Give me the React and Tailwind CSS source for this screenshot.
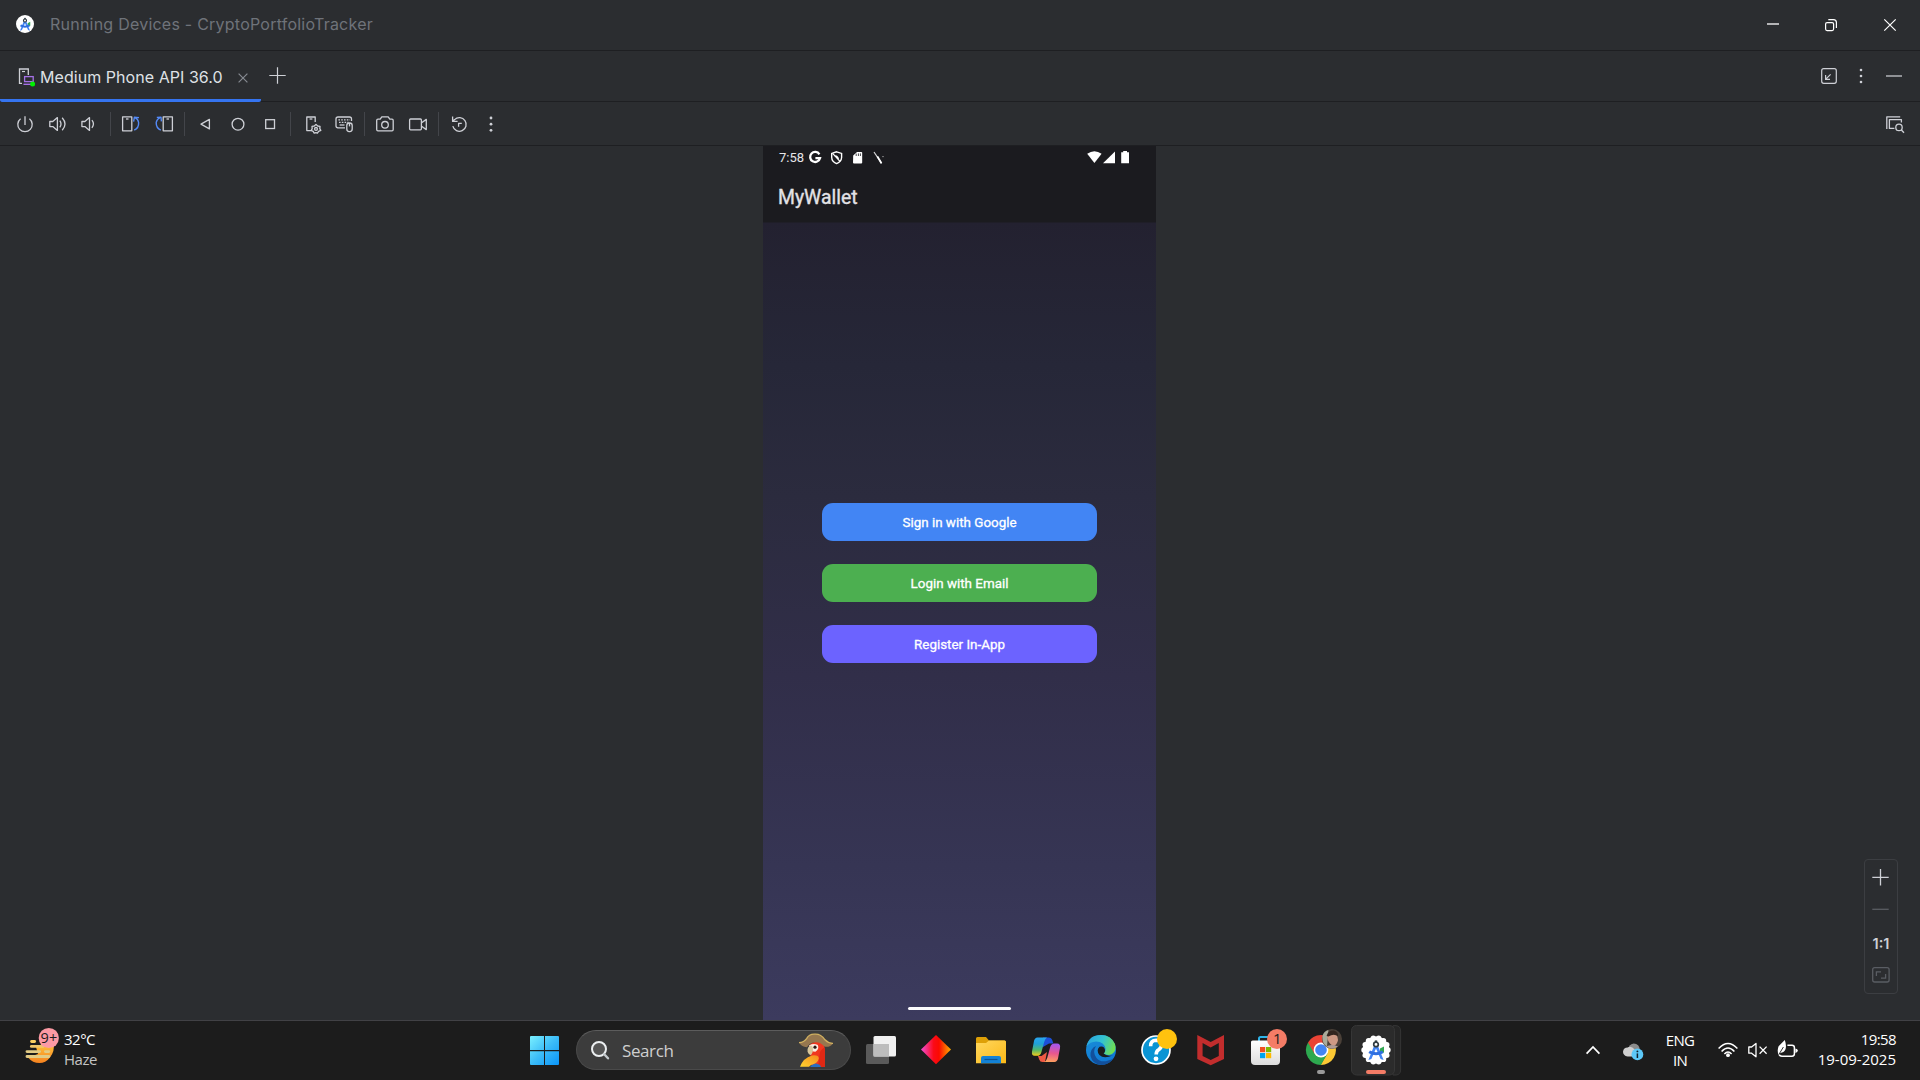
import React from "react";

function Ic({ x, y, w, h, className = "", children }) {
  return (
    <svg
      width={w}
      height={h}
      viewBox={`${x} ${y} ${w} ${h}`}
      fill="none"
      stroke="none"
      className={"block shrink-0 " + className}
    >
      {children}
    </svg>
  );
}

function Tool({ x, className, children }) {
  return (
    <Ic x={x} y={114} w={20} h={20} className={className}>
      <g stroke="#ced0d6" strokeWidth="1.3" strokeLinejoin="round">
        {children}
      </g>
    </Ic>
  );
}

function Divider({ className }) {
  return <div className={"-mt-[2px] h-6 w-px shrink-0 bg-[#43454a] " + className} />;
}

function CompassA({ cx, cy, s }) {
  return (
    <g transform={`translate(${cx} ${cy}) scale(${s})`}>
      <path d="M4 -1 L8 -3 L8 3 L4 4Z" fill="#34a853" />
      <path d="M-1.4 -5 L1.4 -5 L7.6 10.5 L4.6 9.5 L0 -1 L-4.6 9.5 L-7.6 10.5Z" fill="#4285f4" />
      <path d="M-7.6 3.6 Q0 8 7.6 3.6 L6 1.2 Q0 4.4 -6 1.2Z" fill="#2f6fe0" />
      <rect x="-1.2" y="-9" width="2.4" height="4" fill="#303c42" />
      <circle cy="-5" r="2.3" fill="#fff" stroke="#303c42" strokeWidth="1.7" />
    </g>
  );
}

function TitleBar() {
  return (
    <div className="flex h-[51px] shrink-0 items-start border-b border-[#1e1f22]">
      <Ic x={16} y={15} w={18} h={18} className="ml-4 mt-[15px]">
        <circle cx="25" cy="24" r="9" fill="#fff" />
        <CompassA cx={25} cy={23.8} s={0.66} />
      </Ic>
      <span className="ml-4 mt-3 text-[16px] leading-6 tracking-[0.23px] text-[#6f737a] whitespace-nowrap">
        Running Devices - CryptoPortfolioTracker
      </span>
      <div className="ml-auto flex pr-5 pt-[15px]">
        <Ic x={1763} y={15} w={20} h={20}>
          <path d="M1767 24H1779" stroke="#fff" strokeWidth="1.3" />
        </Ic>
        <Ic x={1821} y={15} w={20} h={20} className="ml-[38px]">
          <rect x="1825.6" y="22.6" width="8" height="8" rx="1.5" stroke="#fff" strokeWidth="1.2" />
          <path d="M1828.3 19.7H1833.5Q1836.4 19.7 1836.4 22.6V28" stroke="#fff" strokeWidth="1.2" />
        </Ic>
        <Ic x={1880} y={15} w={20} h={20} className="ml-[39px]">
          <path d="M1884.3 19.3L1895.7 30.7M1895.7 19.3L1884.3 30.7" stroke="#fff" strokeWidth="1.2" />
        </Ic>
      </div>
    </div>
  );
}

function TabBar() {
  return (
    <div className="flex h-[51px] shrink-0 items-start border-b border-[#1e1f22]">
      <div className="flex h-[51px] w-[261px] items-start rounded-b-[2px] border-b-[3px] border-[#3574f0]">
        <Ic x={17} y={66} w={20} h={21} className="ml-[17px] mt-[15px]">
          <path d="M22 83.4H19.5V69H28.3V75" stroke="#ced0d6" strokeWidth="1.3" />
          <path d="M22 71.5H25" stroke="#ced0d6" strokeWidth="1.2" />
          <rect x="24.6" y="76.6" width="8.6" height="5" stroke="#a571e6" strokeWidth="1.3" />
          <path d="M23.5 84.3H31" stroke="#a571e6" strokeWidth="1.4" />
          <circle cx="32.6" cy="84" r="2.5" fill="#00f000" />
        </Ic>
        <span className="ml-[3px] mt-[14px] w-[184px] text-[16px] leading-6 tracking-[0.05px] text-[#dfe1e5] whitespace-nowrap">
          Medium Phone API 36.0
        </span>
        <Ic x={236} y={71} w={14} h={14} className="ml-3 mt-5">
          <path d="M238.6 73.6L247.4 82.4M247.4 73.6L238.6 82.4" stroke="#868a91" strokeWidth="1.2" />
        </Ic>
      </div>
      <Ic x={268} y={66} w={19} h={19} className="ml-[7px] mt-[15px]">
        <path d="M269.3 75.5H285.7M277.5 67.3V83.7" stroke="#ced0d6" strokeWidth="1.2" />
      </Ic>
      <div className="ml-auto flex pr-[16px] pt-[15px]">
        <Ic x={1819} y={66} w={20} h={20}>
          <rect x="1821.7" y="68.7" width="14.6" height="14.6" rx="2" stroke="#ced0d6" strokeWidth="1.2" />
          <path d="M1830.6 74.4L1825.8 79.2M1825.6 75V79.4H1830" stroke="#ced0d6" strokeWidth="1.2" />
        </Ic>
        <Ic x={1851} y={66} w={20} h={20} className="ml-3">
          <g fill="#ced0d6">
            <circle cx="1861" cy="70" r="1.3" />
            <circle cx="1861" cy="76" r="1.3" />
            <circle cx="1861" cy="82" r="1.3" />
          </g>
        </Ic>
        <Ic x={1884} y={66} w={20} h={20} className="ml-[13px]">
          <path d="M1886 76H1902" stroke="#a9abb0" strokeWidth="1.6" />
        </Ic>
      </div>
    </div>
  );
}

function Toolbar() {
  return (
    <div className="flex h-[44px] shrink-0 items-start border-b border-[#1e1f22] pt-3">
      <Tool x={15} className="ml-[15px]">
        <path d="M20.6 118.8A7.2 7.2 0 1 0 29.4 118.8" />
        <path d="M25 116.3V125" />
      </Tool>
      <Tool x={48} className="ml-[13px]">
        <path d="M49.8 121.5H52.8L57.4 117.6V130.4L52.8 126.6H49.8Z" />
        <path d="M59.8 120.7Q62.2 124 59.8 127.3M62.2 117.7Q67.8 124 62.2 130.3" />
      </Tool>
      <Tool x={78} className="ml-[10px]">
        <path d="M81.9 121.5H84.9L89.5 117.6V130.4L84.9 126.6H81.9Z" />
        <path d="M91.9 120.2Q95 124 91.9 127.8" />
      </Tool>
      <Divider className="ml-3" />
      <Tool x={121} className="ml-[10px]">
        <rect x="122.6" y="116.8" width="9.2" height="14" />
        <path d="M126 119H128.5" />
        <path d="M134.2 130.2Q139 128 138.6 122.5Q138.2 119 135 117.6M133.6 121.6L134.4 117.2L139 117.6" stroke="#548af7" strokeWidth="1.4" />
      </Tool>
      <Tool x={154} className="ml-[13px]">
        <rect x="163.2" y="116.8" width="9.2" height="14" />
        <path d="M166.5 119H169" />
        <path d="M160.8 130.2Q156 128 156.2 122.5Q156.8 119 160 117.6M156.8 117.4L161 117.2L161.4 121.4" stroke="#548af7" strokeWidth="1.4" />
      </Tool>
      <Divider className="ml-[10px]" />
      <Tool x={195} className="ml-[10px]">
        <path d="M209.4 119.4V128.9L201 124.1Z" />
      </Tool>
      <Tool x={228} className="ml-[13px]">
        <circle cx="238" cy="124.2" r="5.9" />
      </Tool>
      <Tool x={260} className="ml-3">
        <rect x="265.7" y="119.7" width="8.8" height="8.8" strokeLinejoin="miter" />
      </Tool>
      <Divider className="ml-[10px]" />
      <Tool x={303} className="ml-3">
        <path d="M311.5 130.6H306.8V117H315.2V122" />
        <path d="M309.6 119H312.4" />
        <path d="M316 124.4L317.7 126L320 126.4L319.8 128.7L320.8 130.4L318.6 131.4L317.4 133.2L316 132.6L314.2 133.2L313.2 131.4L311.2 130.4L312.2 128.7L312 126.4L314.3 126Z" />
        <circle cx="316" cy="128.9" r="1.4" />
      </Tool>
      <Tool x={334} className="ml-[11px]">
        <path d="M345 127.8H338Q336 127.8 336 126V119Q336 117 338 117H349.5Q351.5 117 351.5 119V121" />
        <path d="M338.4 119.8H350M339 122.4H348.5" strokeDasharray="1.6 1.2" />
        <path d="M339.6 125H344.5" />
        <rect x="346.8" y="123" width="5.4" height="8.6" rx="2.5" />
        <path d="M349.5 123V126.4" />
      </Tool>
      <Divider className="ml-[10px]" />
      <Tool x={375} className="ml-[10px]">
        <path d="M378 119.2H380.2L381.8 116.8H388.2L389.8 119.2H392Q393.2 119.2 393.2 120.6V129.4Q393.2 130.8 392 130.8H378Q376.7 130.8 376.7 129.4V120.6Q376.7 119.2 378 119.2Z" />
        <circle cx="385" cy="124.8" r="3.3" />
      </Tool>
      <Tool x={408} className="ml-[13px]">
        <rect x="409.6" y="119" width="11.8" height="10.8" rx="1" />
        <path d="M421.6 122.8L426.3 119.4V129.6L421.6 126.2" />
      </Tool>
      <Divider className="ml-[10px]" />
      <Tool x={449} className="ml-[10px]">
        <path d="M452.8 126.2A6.8 6.8 0 1 0 454.6 119.6L452.7 121.3M452.6 116.4V121.4H457.6" />
        <path d="M458.6 126.8V123.4H461.8" />
      </Tool>
      <Tool x={481} className="ml-3">
        <g fill="#ced0d6" stroke="none">
          <circle cx="491" cy="118" r="1.4" />
          <circle cx="491" cy="124.2" r="1.4" />
          <circle cx="491" cy="130.3" r="1.4" />
        </g>
      </Tool>
      <Tool x={1885} className="ml-auto mr-[15px]">
        <path d="M1886.8 129V116.8H1900.2" />
        <path d="M1894.4 128.4H1889.4V119.6H1901.4V122.6" />
        <circle cx="1899" cy="127.4" r="3.2" />
        <path d="M1901.4 130L1904 132.8" />
      </Tool>
    </div>
  );
}

function ActionButton({ className, children }) {
  return (
    <div
      className={
        "flex h-[38px] w-[275px] items-center justify-center rounded-[11px] pt-[2px] font-[Roboto,sans-serif] text-[13.4px] text-white [-webkit-text-stroke:0.3px_white] " +
        className
      }
    >
      {children}
    </div>
  );
}

function Phone() {
  return (
    <div className="flex h-full w-[393px] flex-col bg-[linear-gradient(180deg,#1b1b1f_0px,#1b1b1f_76px,#232130_77px,#262738_220px,#2b2b3e_350px,#312e49_530px,#363554_720px,#3c3b5e_874px)] font-[Roboto,sans-serif]">
      <div className="flex h-[23px] shrink-0 items-start pl-4 pt-1">
        <span className="w-[27px] text-[13px] leading-4 text-[#e6e6e8]">7:58</span>
        <Ic x={808} y={150} w={14} h={15} className="ml-[2px]">
          <path d="M819.4 154.3A5 5 0 1 0 820 158.2H815.4" stroke="#fff" strokeWidth="2.3" />
        </Ic>
        <Ic x={830} y={150} w={14} h={15} className="ml-2">
          <path d="M836.6 151.8L841.6 153.4V157.5Q841.4 161.6 836.6 163.6Q831.8 161.6 831.7 157.5V153.4Z" stroke="#fff" strokeWidth="1.4" />
          <path d="M832.6 153.4L840 161.4M834.4 156Q837.4 155.4 838.4 159" stroke="#fff" strokeWidth="1.3" />
        </Ic>
        <Ic x={852} y={150} w={12} h={15} className="ml-2">
          <path d="M853.2 155.6L857 152H861.4Q862.2 152 862.2 152.8V162.6Q862.2 163.6 861.2 163.6H854Q853 163.6 853 162.6Z" fill="#fff" />
          <path d="M856.2 153.6V156M858.4 153.4V156M860.4 153.4V156" stroke="#1b1b1f" strokeWidth="0.8" />
        </Ic>
        <Ic x={872} y={150} w={14} h={15} className="ml-2">
          <path d="M874 152L881.6 163.4" stroke="#d8d8da" strokeWidth="1.2" />
          <path d="M877.4 156.4L881.4 163.2" stroke="#fff" strokeWidth="1.8" />
          <circle cx="883" cy="156.6" r="0.7" fill="#bbb" />
        </Ic>
        <Ic x={1087} y={150} w={15} h={15} className="ml-auto">
          <path d="M1087.2 153.8Q1094.4 148.6 1101.6 153.8L1094.4 163Z" fill="#fff" />
        </Ic>
        <Ic x={1102} y={150} w={14} h={15}>
          <path d="M1103 163.2L1115 151.4V163.2Z" fill="#fff" />
        </Ic>
        <Ic x={1120} y={150} w={10} h={15} className="ml-1 mr-[26px]">
          <path d="M1123.2 151H1127V152.2H1129V163.3H1121.2V152.2H1123.2Z" fill="#fff" />
        </Ic>
      </div>
      <div className="flex h-[53px] shrink-0 items-start pl-[15px] pt-[17px]">
        <span className="text-[19.4px] leading-6 text-[#e3e2e6] [-webkit-text-stroke:0.35px_#e3e2e6]">MyWallet</span>
      </div>
      <div className="flex flex-1 flex-col items-center gap-[23px] pt-[281px]">
        <ActionButton className="bg-[#4285f4]">Sign in with Google</ActionButton>
        <ActionButton className="bg-[#4caf50]">Login with Email</ActionButton>
        <ActionButton className="bg-[#6c63ff]">Register In-App</ActionButton>
      </div>
      <div className="mx-auto mb-[10px] h-[3px] w-[103px] shrink-0 rounded-full bg-[#fbfbfd]" />
    </div>
  );
}

function ZoomControls() {
  return (
    <div className="absolute right-[22px] top-[713px] flex h-[135px] w-[34px] flex-col items-center rounded-[4px] border border-[#3c3e42]">
      <Ic x={1871} y={867} w={20} h={20} className="mt-[7px]">
        <path d="M1872.3 877.3H1888.7M1880.5 869.1V885.5" stroke="#ced0d6" strokeWidth="1.3" />
      </Ic>
      <Ic x={1871} y={899} w={20} h={20} className="mt-3">
        <path d="M1872.3 909.3H1888.7" stroke="#5a5d63" strokeWidth="1.3" />
      </Ic>
      <span className="mt-[13px] h-6 text-[14.5px] font-semibold leading-6 text-[#ced0d6]">1:1</span>
      <Ic x={1871} y={965} w={20} h={20} className="mt-[9px]">
        <rect x="1872.7" y="967.6" width="16.4" height="14.4" rx="2" stroke="#5a5d63" strokeWidth="1.3" />
        <path d="M1876.4 976V971.8H1881M1881 978.2H1885.6V974" stroke="#5a5d63" strokeWidth="1.3" />
      </Ic>
    </div>
  );
}

function Slot({ x, children }) {
  return (
    <Ic x={x} y={1021} w={55} h={59}>
      {children}
    </Ic>
  );
}

const SCALLOPS = Array.from({ length: 14 }, (_, i) => (i * 2 * Math.PI) / 14);

function TaskIcons() {
  return (
    <div className="ml-[3px] flex">
      <Slot x={854}>
        <rect x="866" y="1044" width="23" height="20" rx="1.5" fill="#5a5a5a" />
        <rect x="873.5" y="1036" width="22.5" height="20.5" rx="1.5" fill="#f1f1f1" />
        <path d="M873.5 1044H889V1056.5H873.5Z" fill="#bdbdbd" />
      </Slot>
      <Slot x={909}>
        <defs>
          <linearGradient id="dia" x1="0" x2="1">
            <stop offset="0" stopColor="#f050d8" />
            <stop offset=".42" stopColor="#fb0a18" />
            <stop offset=".6" stopColor="#fb0a00" />
            <stop offset="1" stopColor="#ffb000" />
          </linearGradient>
        </defs>
        <path d="M936 1035L951 1049.5L936 1064.2L921 1049.5Z" fill="url(#dia)" />
      </Slot>
      <Slot x={964}>
        <defs>
          <linearGradient id="fold" x1="0" y1="0" x2="1" y2="1">
            <stop offset="0" stopColor="#ffd75e" />
            <stop offset="1" stopColor="#fbb917" />
          </linearGradient>
        </defs>
        <path d="M976 1038.5Q976 1037 977.5 1037H986L989 1040.5H1004.5Q1006 1040.5 1006 1042V1050H976Z" fill="#dea007" />
        <path d="M976 1043H986L989 1040.5H1004.5Q1006 1040.5 1006 1042V1063.3H976Z" fill="url(#fold)" />
        <path d="M981 1063.3V1058Q981 1056 983 1056H999Q1001 1056 1001 1058V1063.3Z" fill="#1382d6" />
        <path d="M984.5 1059.5H997.5" stroke="#0b5394" strokeWidth="1.2" />
      </Slot>
      <Slot x={1019}>
        <defs>
          <linearGradient id="cpa" x1="0" y1="0" x2="0" y2="1">
            <stop offset="0" stopColor="#2aa6ee" />
            <stop offset=".35" stopColor="#1fa0d8" />
            <stop offset=".68" stopColor="#52b86a" />
            <stop offset="1" stopColor="#f5cc1b" />
          </linearGradient>
          <linearGradient id="cpb" x1=".3" y1="0" x2=".2" y2="1">
            <stop offset="0" stopColor="#a456f0" />
            <stop offset=".5" stopColor="#e8568e" />
            <stop offset="1" stopColor="#ffa45c" />
          </linearGradient>
        </defs>
        <path d="M1043 1037.5H1048.5Q1051.5 1037.5 1052.4 1040.5L1053.4 1043.4H1049L1043 1047Z" fill="#1c50d8" />
        <path d="M1038 1056H1041.5L1047 1052L1045 1062H1042.5Q1040 1062 1039.2 1059.4Z" fill="#ef5a44" />
        <path d="M1037.5 1037.5H1047Q1045 1038.8 1044.2 1042L1041.3 1052.4Q1040.3 1055.8 1037 1055.8H1034.6Q1031.4 1055.8 1032 1051.4L1034 1041Q1034.8 1037.5 1037.5 1037.5Z" fill="url(#cpa)" />
        <path d="M1054.4 1062H1044Q1046.4 1061 1047.2 1058L1050.2 1047Q1051.2 1043.4 1054.4 1043.4H1057Q1060.8 1043.4 1060 1048L1058 1058.6Q1057.2 1062 1054.4 1062Z" fill="url(#cpb)" />
      </Slot>
      <Slot x={1074}>
        <defs>
          <linearGradient id="edt" x1="0" y1=".3" x2="1" y2=".6">
            <stop offset="0" stopColor="#2aa5e0" />
            <stop offset=".5" stopColor="#34c3d0" />
            <stop offset="1" stopColor="#72e04c" />
          </linearGradient>
          <linearGradient id="edb" x1="0" y1="0" x2=".6" y2="1">
            <stop offset="0" stopColor="#1a8fd8" />
            <stop offset="1" stopColor="#0f78d4" />
          </linearGradient>
        </defs>
        <circle cx="1101" cy="1050" r="15" fill="url(#edb)" />
        <path d="M1096 1046Q1092 1052 1096.5 1058Q1102 1064.6 1113.6 1058.2Q1109 1065 1101 1065Q1092.5 1064 1090.5 1056Q1090 1048.6 1096 1046Z" fill="#12509c" />
        <path d="M1086.4 1046.4Q1088.8 1035 1101 1035Q1111 1035 1115 1044Q1117 1051 1112 1054Q1107.6 1056 1103.8 1053.6Q1105.8 1051.6 1105.6 1049Q1104.4 1041.4 1096 1041.4Q1090 1041.6 1086.4 1046.4Z" fill="url(#edt)" />
        <path d="M1104 1047.4Q1106.4 1050.8 1103.6 1053.6Q1106.6 1056.8 1113 1055.2Q1104 1059.6 1099.4 1055Q1095.8 1050.4 1099.6 1046.8Q1102.2 1045.8 1104 1047.4Z" fill="#1c1c1c" />
      </Slot>
      <Slot x={1129}>
        <circle cx="1156" cy="1050" r="14" fill="#0a94d4" stroke="#fff" strokeWidth="1.7" />
        <path d="M1150.6 1046.2Q1150.6 1040.2 1156.2 1040.2Q1161.6 1040.4 1161.6 1045.2Q1161.4 1048 1158.6 1049.8Q1156.2 1051.2 1156.2 1054.4" stroke="#fff" strokeWidth="3.6" />
        <circle cx="1156" cy="1058.8" r="2.4" fill="#fff" />
        <circle cx="1167" cy="1039" r="10" fill="#ffc20e" />
      </Slot>
      <Slot x={1184}>
        <path d="M1197.3 1035L1210.7 1042L1224 1035V1059L1210.7 1065.2L1197.3 1059Z" fill="#c22d2d" />
        <path d="M1202.6 1043L1210.7 1047.6L1218.8 1043V1056L1210.7 1060L1202.6 1056Z" fill="#1c1c1c" />
      </Slot>
      <Slot x={1239}>
        <defs>
          <linearGradient id="sto" x1="0" y1="0" x2="0" y2="1">
            <stop offset="0" stopColor="#fff" />
            <stop offset="1" stopColor="#dcdcdc" />
          </linearGradient>
        </defs>
        <path d="M1259 1042V1038.6Q1259 1037 1260.6 1037H1270" stroke="#2fb3e8" strokeWidth="2" />
        <path d="M1251 1042Q1251 1040.4 1252.6 1040.4H1280V1061Q1280 1065 1276 1065H1255Q1251 1065 1251 1061Z" fill="url(#sto)" />
        <rect x="1260" y="1047" width="5.2" height="5.2" fill="#f25022" />
        <rect x="1266" y="1047" width="5.2" height="5.2" fill="#7fba00" />
        <rect x="1260" y="1053" width="5.2" height="5.2" fill="#00a4ef" />
        <rect x="1266" y="1053" width="5.2" height="5.2" fill="#ffb900" />
        <circle cx="1277" cy="1039" r="10" fill="#f47c66" />
        <text x="1277.4" y="1044.4" textAnchor="middle" fontFamily="Open Sans, sans-serif" fontSize="15" fill="#1c1c1c">1</text>
      </Slot>
      <Slot x={1294}>
        <path d="M1321 1050L1308 1042.5A15 15 0 0 1 1334 1042.5Z" fill="#ea4335" />
        <path d="M1321 1050L1321 1065A15 15 0 0 1 1308 1042.5Z" fill="#2da94f" />
        <path d="M1308 1042.5L1314.5 1053.8L1321 1050L1321 1043H1334Z" fill="#ea4335" />
        <path d="M1321 1043H1334.2A15 15 0 0 1 1321 1065L1327.5 1053.7Z" fill="#fcc934" />
        <path d="M1314.5 1053.8L1321 1065L1327.6 1053.8Z" fill="#2da94f" />
        <path d="M1321 1065L1327.6 1053.8L1333 1058Z" fill="#fcc934" />
        <circle cx="1321" cy="1050" r="7.4" fill="#fff" />
        <circle cx="1321" cy="1050" r="5.8" fill="#4285f4" />
        <circle cx="1332" cy="1039" r="10" fill="#4a4038" />
        <path d="M1322.4 1036Q1324 1031 1328.4 1030L1327 1046.6Q1322 1044 1322.4 1036Z" fill="#a9ab9a" />
        <path d="M1327 1036.6Q1331 1032.8 1337 1034.4L1338 1040Q1337 1045.6 1333 1046Q1328 1043.6 1327 1036.6Z" fill="#cf9a84" />
        <path d="M1326.6 1036Q1328 1030.4 1334 1030.6Q1338.6 1032 1338 1036.4Q1334 1033 1328.4 1036.6Z" fill="#33261f" />
        <path d="M1326 1046.6Q1331 1043.4 1338 1046.4Q1332 1051 1326 1046.6Z" fill="#b09c94" />
        <rect x="1317" y="1070" width="8" height="4" rx="2" fill="#9a9a9a" />
      </Slot>
      <Slot x={1349}>
        <path d="M1393 1025.6H1396Q1400.6 1026 1400.6 1031V1070Q1400.6 1074.6 1396 1075H1393Z" fill="#262626" stroke="#343434" strokeWidth="1" />
        <rect x="1351.5" y="1025.5" width="43" height="49.5" rx="5" fill="#2b2b2b" stroke="#363636" />
        <circle cx="1376" cy="1050" r="13.4" fill="#fff" />
        {SCALLOPS.map((a) => (
          <circle key={a} cx={1376 + 12 * Math.cos(a)} cy={1050 + 12 * Math.sin(a)} r="2.7" fill="#fff" />
        ))}
        <CompassA cx={1376} cy={1049.4} s={1} />
        <rect x="1366" y="1070" width="20" height="4" rx="2" fill="#f47c66" />
      </Slot>
    </div>
  );
}

function Taskbar() {
  return (
    <div className="flex h-[60px] shrink-0 items-start border-t border-[#414145] bg-[#1c1c1c] font-['Open_Sans',sans-serif] text-[15px] text-white">
      <div className="flex w-[524px] shrink-0">
        <Ic x={22} y={1021} w={40} h={59} className="ml-[22px]">
          <defs>
            <linearGradient id="sun" x1="0" y1="0" x2="0" y2="1">
              <stop offset="0" stopColor="#ffc23c" />
              <stop offset="1" stopColor="#f5821f" />
            </linearGradient>
          </defs>
          <path d="M36 1047H40L41 1044H53.6Q55 1051 50 1057.4Q45.6 1063 39.5 1063Q32.6 1063 28 1057.5L38 1054Z" fill="url(#sun)" />
          <g stroke="#e2cb85" strokeWidth="2.9" strokeLinecap="round">
            <path d="M31.6 1041.5H34.6" stroke="#f8cf62" />
            <path d="M31.4 1046.4H43" stroke="#efc76a" />
            <path d="M27 1051.6H39.6M45.4 1051.6H48.8M27 1056.5H48.8" />
          </g>
          <circle cx="48.8" cy="1038" r="10.1" fill="#fc9aa4" />
          <text x="48.9" y="1043.4" textAnchor="middle" fontFamily="Open Sans, sans-serif" fontSize="14.5" fill="#1c1c1c">9+</text>
        </Ic>
        <div className="ml-[2px] pt-2 leading-5 tracking-[-0.5px]">
          <div>32°C</div>
          <div className="text-[#c4c4c4]">Haze</div>
        </div>
      </div>
      <Ic x={524} y={1021} w={42} h={59}>
        <defs>
          <linearGradient id="win" gradientUnits="userSpaceOnUse" x1="530" y1="1036" x2="559" y2="1065">
            <stop offset="0" stopColor="#7af0ff" />
            <stop offset=".5" stopColor="#3cbcf8" />
            <stop offset="1" stopColor="#0a94f8" />
          </linearGradient>
        </defs>
        <path d="M530 1037Q530 1036 531 1036H544V1050H530ZM545 1036H558Q559 1036 559 1037V1050H545ZM530 1051.2H544V1065H531Q530 1065 530 1064ZM545 1051.2H559V1064Q559 1065 558 1065H545Z" fill="url(#win)" />
      </Ic>
      <div className="ml-[10px] mt-[9px] flex h-10 w-[275px] shrink-0 items-center rounded-full border border-[#4a4a4a] border-t-[#5c5c5c] bg-[#3c3c3c]">
        <Ic x={589} y={1039} w={22} h={22} className="ml-3">
          <circle cx="599" cy="1049" r="7" fill="#555" stroke="#eceff1" strokeWidth="2" />
          <path d="M604.2 1054.2L608 1058.3" stroke="#c3c8cc" strokeWidth="2.4" strokeLinecap="round" />
        </Ic>
        <span className="ml-[11px] pt-px text-[17px] tracking-[-0.4px] text-[#cfcfcf]">Search</span>
        <Ic x={797} y={1032} w={38} h={36} className="ml-auto mr-[15px]">
          <defs>
            <linearGradient id="wing" x1="0" y1="1" x2="1" y2="0">
              <stop offset="0" stopColor="#ffd530" />
              <stop offset="1" stopColor="#f58a1e" />
            </linearGradient>
          </defs>
          <path d="M809 1046Q812 1041 820 1041.5Q824.5 1043 824.8 1049V1067H812Z" fill="#f0371f" />
          <path d="M820 1052Q824 1046 824.8 1049V1067H818Z" fill="#e02814" />
          <path d="M810 1067Q814 1061 820 1065L821 1067Z" fill="#2a6fc0" />
          <path d="M800 1066.8Q803 1058 812 1055.4Q818.8 1054.6 818.8 1058.6Q817.6 1063.8 811 1065L809 1066.8Z" fill="url(#wing)" />
          <path d="M809 1045.4Q813.6 1043 817.8 1045Q819.6 1049 815.4 1051.8Q811 1051.6 809 1045.4Z" fill="#fbeee4" />
          <path d="M811 1045.6Q807 1046.6 807.6 1051.6Q808.4 1055 811 1055Q814 1051.4 812.6 1046.8Z" fill="#d9c79c" />
          <circle cx="815" cy="1047.2" r="1.6" fill="#2a1712" />
          <path d="M799 1042.6Q804 1042.4 806.6 1038.6Q809 1034 814.6 1034.2Q820.6 1033.6 825 1039.8Q828.6 1043.6 833 1043.4Q830 1047.6 824.4 1046.6Q820 1041.2 813.6 1042.4Q809.6 1043 807 1047.2Q801 1046.8 799 1042.6Z" fill="#96774f" />
          <path d="M799 1042.6Q804 1042.4 806.6 1038.6Q809 1034 814.6 1034.2Q820.6 1033.6 825 1039.8Q828.6 1043.6 833 1043.4" stroke="#d0b060" strokeWidth="1.3" />
        </Ic>
      </div>
      <TaskIcons />
      <div className="ml-auto flex">
        <Ic x={1583} y={1021} w={20} h={59}>
          <path d="M1586.6 1053.6L1593 1047L1599.4 1053.6" stroke="#fff" strokeWidth="1.7" />
        </Ic>
        <Ic x={1620} y={1021} w={26} h={59} className="ml-[17px]">
          <path d="M1628 1050Q1628.6 1044 1633.6 1043.4Q1639.4 1043.6 1640 1050L1637 1056H1629Z" fill="#8c8c8c" />
          <path d="M1627.6 1056.6Q1623 1055.6 1623 1051.8Q1623.6 1047.6 1627.6 1047.6Q1631 1045 1634.6 1049.4L1638.6 1056.6Z" fill="#cfcfcf" />
          <circle cx="1637.4" cy="1054.4" r="5.9" fill="#5cc8f8" />
          <path d="M1637.4 1053.4V1058" stroke="#10222c" strokeWidth="1.5" />
          <circle cx="1637.4" cy="1051.4" r="0.95" fill="#10222c" />
        </Ic>
        <div className="ml-[13px] w-[42px] pt-[9px] text-center leading-5 tracking-[-0.7px]">
          <div>ENG</div>
          <div>IN</div>
        </div>
        <Ic x={1716} y={1021} w={24} h={59} className="ml-[15px]">
          <g stroke="#fff" strokeWidth="1.5">
            <path d="M1718.6 1048.6Q1728 1038.6 1737.4 1048.6" />
            <path d="M1721.6 1051.4Q1728 1044.4 1734.4 1051.4" />
            <path d="M1724.4 1054Q1728 1050 1731.6 1054" />
          </g>
          <circle cx="1728" cy="1055.2" r="1.9" fill="#fff" />
        </Ic>
        <Ic x={1746} y={1021} w={24} h={59} className="ml-[6px]">
          <path d="M1748.8 1047H1751.6L1756 1043.4V1056.8L1751.6 1053.2H1748.8Z" stroke="#fff" strokeWidth="1.3" strokeLinejoin="round" />
          <path d="M1759.6 1046.6L1766.6 1053.8M1766.6 1046.6L1759.6 1053.8" stroke="#fff" strokeWidth="1.3" />
        </Ic>
        <Ic x={1776} y={1021} w={24} h={59} className="ml-[6px]">
          <path d="M1787.4 1045.2H1792Q1794.4 1045.2 1794.4 1047.6V1053.8Q1794.4 1056.2 1792 1056.2H1782Q1779.4 1056.2 1779.2 1054.4" stroke="#fff" strokeWidth="1.5" />
          <path d="M1795.4 1048.4Q1797.8 1048.8 1797.8 1050.6Q1797.8 1052.6 1795.4 1053Z" fill="#fff" />
          <path d="M1784.8 1040Q1786.8 1046 1785.4 1049.6Q1783.8 1052.8 1780.4 1053L1778.6 1055Q1776.8 1050.6 1778.6 1046.2Q1781.4 1043.4 1784.8 1040Z" fill="#fff" />
          <path d="M1778.8 1054.6L1783.4 1047" stroke="#1c1c1c" strokeWidth="0.9" />
        </Ic>
        <div className="ml-[10px] mr-6 w-[86px] pt-2 text-right leading-5 whitespace-nowrap">
          <div className="tracking-[-0.6px]">19:58</div>
          <div>19-09-2025</div>
        </div>
      </div>
    </div>
  );
}

export default function App() {
  return (
    <div className="flex h-[1080px] w-[1920px] flex-col overflow-hidden bg-[#2b2d30] font-[Inter,sans-serif]">
      <TitleBar />
      <TabBar />
      <Toolbar />
      <div className="relative flex h-[874px] shrink-0 justify-center pr-px">
        <Phone />
        <ZoomControls />
      </div>
      <Taskbar />
    </div>
  );
}
